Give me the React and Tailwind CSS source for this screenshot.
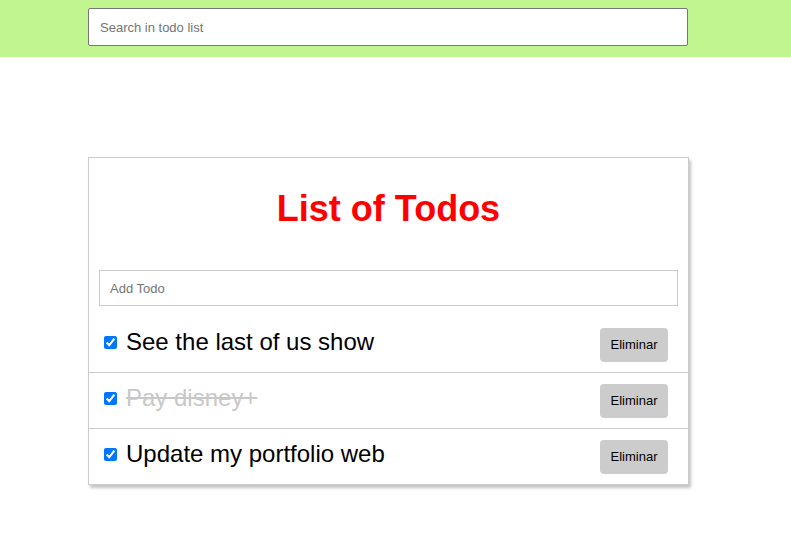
import { useState } from 'react';

const initialTodos = [
  { id: 1, text: 'See the last of us show', completed: false },
  { id: 2, text: 'Pay disney+', completed: true },
  { id: 3, text: 'Update my portfolio web', completed: false },
];

export default function App() {
  const [todos, setTodos] = useState(initialTodos);
  const [search, setSearch] = useState('');
  const [newTodo, setNewTodo] = useState('');

  const removeTodo = (id) => setTodos(todos.filter((t) => t.id !== id));

  return (
    <div className="min-h-screen bg-white font-['Liberation_Sans',Arial,sans-serif]">
      {/* Search bar */}
      <header className="h-[57px] bg-[#c1f58f] pt-[8px] pl-[88px]">
        <input
          value={search}
          onChange={(e) => setSearch(e.target.value)}
          placeholder="Search in todo list"
          className="w-[600px] h-[38px] border border-[#767676] rounded-[2px] bg-white pl-[11px] text-[13px] text-black placeholder:text-[#757575] outline-none"
        />
      </header>

      {/* Todo card */}
      <main className="pt-[100px] pl-[88px]">
        <div className="w-[601px] border border-[#ccc] bg-white shadow-[2px_3px_3px_#c4c4c4]">
          <h1 className="pt-[30px] pb-[41px] text-center text-[36px] leading-[41px] font-bold text-[#ff0000]">
            List of Todos
          </h1>
          <div className="px-[10px]">
            <input
              value={newTodo}
              onChange={(e) => setNewTodo(e.target.value)}
              placeholder="Add Todo"
              className="w-full h-[36px] border border-[#ccc] pl-[10px] text-[13px] text-black placeholder:text-[#757575] outline-none"
            />
          </div>
          <ul className="mt-[11px]">
            {todos.map((todo) => (
              <li
                key={todo.id}
                className="flex items-center h-[56px] border-b border-[#ccc] last:border-b-0 last:h-[55px]"
              >
                <input
                  type="checkbox"
                  checked
                  readOnly
                  className="ml-[15px] mb-[4px] w-[13px] h-[13px] accent-[#0075ff]"
                />
                <span
                  className={`ml-[9px] mb-[6px] flex-1 text-[24px] leading-[28px] ${
                    todo.completed ? 'line-through text-[#c8c8c8]' : 'text-black'
                  }`}
                >
                  {todo.text}
                </span>
                <button
                  onClick={() => removeTodo(todo.id)}
                  className="mr-[20px] w-[68px] h-[34px] rounded-[4px] bg-[#ccc] text-[13px] text-black"
                >
                  Eliminar
                </button>
              </li>
            ))}
          </ul>
        </div>
      </main>
    </div>
  );
}
